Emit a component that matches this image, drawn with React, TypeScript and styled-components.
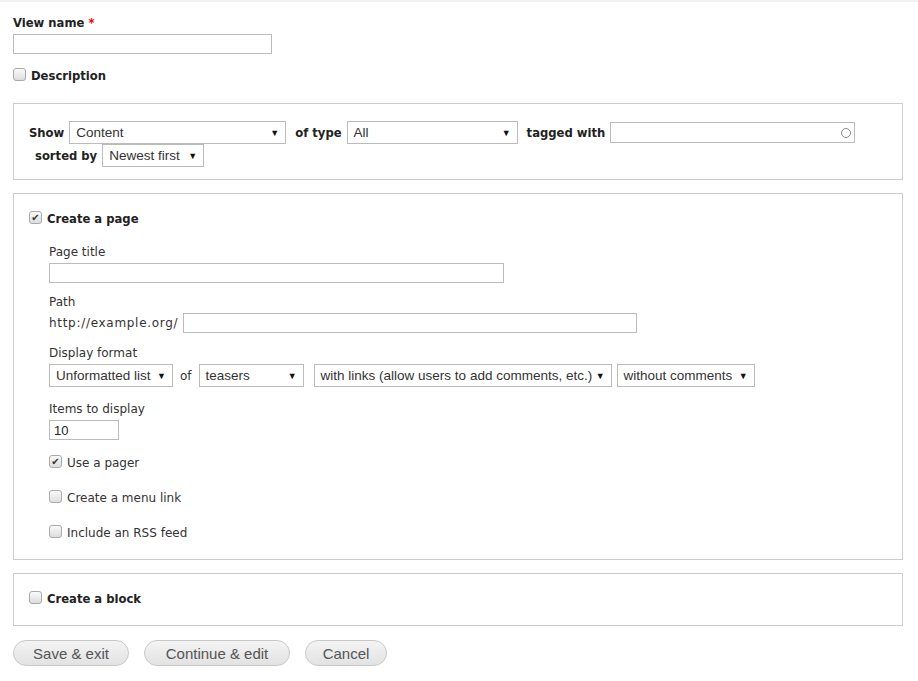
import React from 'react';
import styled, { createGlobalStyle } from 'styled-components';

const Global = createGlobalStyle`
    body { margin: 0; background: #fff; font-family: "DejaVu Sans", Verdana, sans-serif; font-size: 12px; color: #333; }
`;

const Page = styled.div`
    border-top: 2px solid #f2f2f2;
    padding: 13px 15px 0 13px;
`;

const Label = styled.div<{ $bold?: boolean }>`
    font-weight: ${({ $bold }) => ($bold ? 'bold' : 'normal')};
    font-size: ${({ $bold }) => ($bold ? '11.6px' : '12px')};
    color: ${({ $bold }) => ($bold ? '#222' : '#333')};
    margin-bottom: 3px;
    line-height: 16px;
`;

const Required = styled.span`
    color: #e00;
`;

const TextInput = styled.div<{ $w: number }>`
    width: ${({ $w }) => $w}px;
    height: 20px;
    box-sizing: border-box;
    border: 1px solid #bbb;
    font-family: "Liberation Sans", Arial, sans-serif;
    font-size: 13px;
    padding: 2px 4px;
    line-height: 15px;
    color: #222;
`;

const CheckRow = styled.label<{ $bold?: boolean; $mt?: number }>`
    display: flex;
    align-items: center;
    gap: 5px;
    margin-top: ${({ $mt }) => $mt ?? 0}px;
    font-weight: ${({ $bold }) => ($bold ? 'bold' : 'normal')};
    font-size: ${({ $bold }) => ($bold ? '11.6px' : '12px')};
    color: ${({ $bold }) => ($bold ? '#222' : '#333')};
    line-height: 16px;
`;

const Box = styled.span`
    width: 11px;
    height: 11px;
    border: 1px solid #aaa;
    border-radius: 3px;
    background: linear-gradient(#fafafa, #ddd);
    display: inline-flex;
    align-items: center;
    justify-content: center;
    font-size: 10px;
    color: #333;
    margin-top: -3px;
`;

const Fieldset = styled.div<{ $pad: string; $mt: number }>`
    border: 1px solid #ccc;
    padding: ${({ $pad }) => $pad};
    margin-top: ${({ $mt }) => $mt}px;
`;

const Row = styled.div`
    display: flex;
    align-items: center;
    gap: 5px;
    flex-wrap: wrap;
`;

const Bold = styled.span<{ $ml?: number }>`
    font-weight: bold;
    font-size: 11.6px;
    color: #222;
    margin-left: ${({ $ml }) => $ml ?? 0}px;
`;

const PathText = styled.span`
    letter-spacing: 0.7px;
`;

const Select = styled.div<{ $w: number }>`
    width: ${({ $w }) => $w}px;
    height: 23px;
    box-sizing: border-box;
    border: 1px solid #bbb;
    background: #fff;
    display: flex;
    align-items: center;
    justify-content: space-between;
    padding: 0 6px;
    font-family: "Liberation Sans", Arial, sans-serif;
    font-size: 13.5px;
    color: #333;
    &::after { content: '▼'; font-size: 9px; color: #111; }
`;

const Search = styled.div`
    width: 245px;
    height: 21px;
    box-sizing: border-box;
    border: 1px solid #bbb;
    display: flex;
    justify-content: flex-end;
    align-items: center;
    padding-right: 3px;
    &::after { content: ''; width: 8px; height: 8px; border: 1px solid #888; border-radius: 50%; }
`;

const Inner = styled.div`
    padding-left: 20px;
    margin-top: 17px;
`;

const Field = styled.div<{ $mt: number }>`
    margin-top: ${({ $mt }) => $mt}px;
`;

const Buttons = styled.div`
    display: flex;
    gap: 15px;
    margin-top: 14px;
`;

const Button = styled.div<{ $w: number }>`
    width: ${({ $w }) => $w}px;
    height: 26px;
    box-sizing: border-box;
    border: 1px solid #c8c8c8;
    border-radius: 13px;
    background: linear-gradient(#f4f4f4, #e2e2e2);
    display: flex;
    align-items: center;
    justify-content: center;
    font-family: "Liberation Sans", Arial, sans-serif;
    font-size: 15px;
    color: #555;
`;

export default function App() {
    return (
        <>
            <Global />
            <Page>
                <Label $bold>
                    View name <Required>*</Required>
                </Label>
                <TextInput $w={259} />
                <CheckRow $bold $mt={14}>
                    <Box />
                    Description
                </CheckRow>

                <Fieldset $pad="17px 15px 12px 15px" $mt={19}>
                    <Row>
                        <Bold>Show</Bold>
                        <Select $w={217}>Content</Select>
                        <Bold $ml={4}>of type</Bold>
                        <Select $w={171}>All</Select>
                        <Bold $ml={4}>tagged with</Bold>
                        <Search />
                    </Row>
                    <Row>
                        <Bold $ml={6}>sorted by</Bold>
                        <Select $w={102}>Newest first</Select>
                    </Row>
                </Fieldset>

                <Fieldset $pad="17px 15px 18px 15px" $mt={13}>
                    <CheckRow $bold>
                        <Box>✔</Box>
                        Create a page
                    </CheckRow>
                    <Inner>
                        <Label>Page title</Label>
                        <TextInput $w={455} />
                        <Field $mt={11}>
                            <Label>Path</Label>
                            <Row>
                                <PathText>http://example.org/</PathText>
                                <TextInput $w={454} />
                            </Row>
                        </Field>
                        <Field $mt={12}>
                            <Label>Display format</Label>
                            <Row>
                                <Select $w={124}>Unformatted list</Select>
                                <span style={{ margin: '0 2px' }}>of</span>
                                <Select $w={105}>teasers</Select>
                                <span />
                                <Select $w={298}>with links (allow users to add comments, etc.)</Select>
                                <Select $w={138}>without comments</Select>
                            </Row>
                        </Field>
                        <Field $mt={14}>
                            <Label>Items to display</Label>
                            <TextInput $w={70}>10</TextInput>
                        </Field>
                        <CheckRow $mt={15}>
                            <Box>✔</Box>
                            Use a pager
                        </CheckRow>
                        <CheckRow $mt={19}>
                            <Box />
                            Create a menu link
                        </CheckRow>
                        <CheckRow $mt={19}>
                            <Box />
                            Include an RSS feed
                        </CheckRow>
                    </Inner>
                </Fieldset>

                <Fieldset $pad="17px 15px 18px 15px" $mt={13}>
                    <CheckRow $bold>
                        <Box />
                        Create a block
                    </CheckRow>
                </Fieldset>

                <Buttons>
                    <Button $w={116}>Save &amp; exit</Button>
                    <Button $w={146}>Continue &amp; edit</Button>
                    <Button $w={82}>Cancel</Button>
                </Buttons>
            </Page>
        </>
    );
}
